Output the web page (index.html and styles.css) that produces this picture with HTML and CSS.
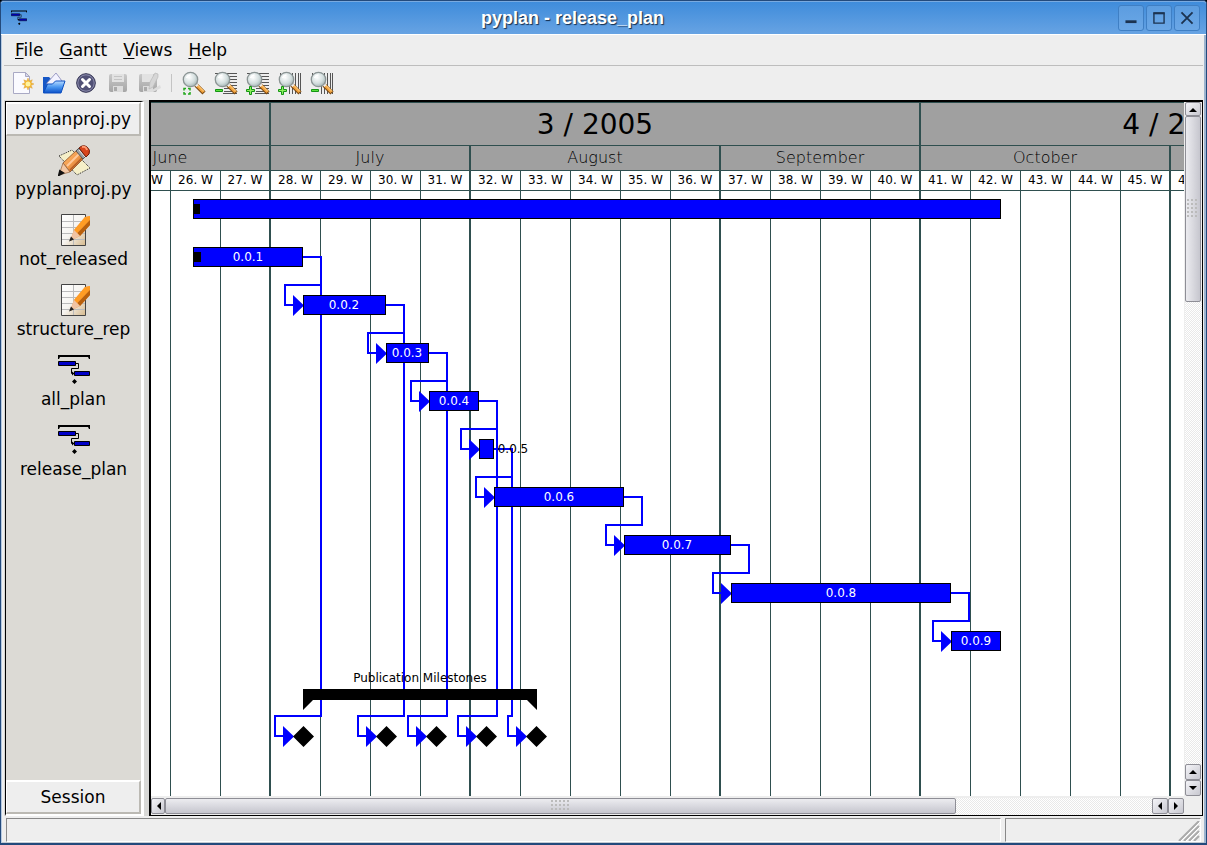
FILE: index.html
```
<!DOCTYPE html>
<html lang="en">
<head>
<meta charset="utf-8">
<title>pyplan - release_plan</title>
<link rel="stylesheet" href="styles.css">
</head>
<body>
<svg class="defs" aria-hidden="true">
  <defs>
    <linearGradient id="wood" x1="0" y1="0" x2="1" y2="1"><stop offset="0" stop-color="#ffc27a"/><stop offset=".5" stop-color="#f29a4a"/><stop offset="1" stop-color="#a8571c"/></linearGradient>
    <radialGradient id="glass" cx=".4" cy=".35" r=".7"><stop offset="0" stop-color="#fff"/><stop offset=".6" stop-color="#d3dede"/><stop offset="1" stop-color="#9fb0b0"/></radialGradient>
    <linearGradient id="sheet" x1="0" y1="0" x2="1" y2="1"><stop offset="0" stop-color="#fff"/><stop offset=".5" stop-color="#f6f4f0"/><stop offset="1" stop-color="#d6b98c"/></linearGradient>
    <linearGradient id="folder" x1="0" y1="0" x2="0" y2="1"><stop offset="0" stop-color="#b9dcff"/><stop offset=".5" stop-color="#4a97f0"/><stop offset="1" stop-color="#0b50c8"/></linearGradient>
    <linearGradient id="disk" x1="0" y1="0" x2="0" y2="1"><stop offset="0" stop-color="#c9c9c9"/><stop offset="1" stop-color="#a6a6a6"/></linearGradient>
    <symbol id="lens" viewBox="0 0 24 24">
      <path d="M14 14l8 8" stroke="#7c4a12" stroke-width="4.500"/>
      <path d="M15 14.500l6.500 6.500" stroke="#f2a23c" stroke-width="3"/>
      <path d="M15.500 14l6.500 6.500" stroke="#ffd58c" stroke-width="1"/>
      <path d="M13.500 13l2 2" stroke="#eee" stroke-width="3"/>
      <circle cx="8.500" cy="8.500" r="7.200" fill="url(#glass)" stroke="#8b9494" stroke-width="1.300"/>
      <path d="M4.500 7a5 5 0 0 1 4-3" fill="none" stroke="#fff" stroke-width="1.500"/>
    </symbol>
    <symbol id="rows" viewBox="0 0 24 24"><path d="M1 2.500h22M3 5.500h20M3 8.500h20M10 11.500h13M10 14.500h13M10 17.500h13M10 20.500h13M9 22.500h14" stroke="#555" stroke-width="1"/></symbol>
    <symbol id="cols" viewBox="0 0 24 24"><path d="M2.500 2v10M5.500 2v10M8.500 2v10M11.500 2v21M14.500 2v21M17.500 2v21M20.500 2v21M22.500 2v21" stroke="#555" stroke-width="1"/></symbol>
    <symbol id="plus" viewBox="0 0 24 24"><path d="M3.500 15.500h2v3h3v2h-3v3h-2v-3h-3v-2h3z" fill="#8cf05c" stroke="#149414"/></symbol>
    <symbol id="minus" viewBox="0 0 24 24"><path d="M1.500 18.500h7v2h-7z" fill="#5ae03c" stroke="#149414"/></symbol>
    <symbol id="report" viewBox="0 0 32 32">
      <path d="M3.500 .5h24v31h-24z" fill="url(#sheet)" stroke="#444"/>
      <path d="M4 7.500h23M4 13.500h23M4 19.500h23M4 25.500h23M15.500 1v30" stroke="#bbb" stroke-width="1"/>
      <path d="M12 27l4-11L27 3l5-1v9L22 22z" fill="url(#wood)"/>
      <path d="M16 16L27 3l5-1v4L19 19z" fill="#ff9c24"/>
      <path d="M22 22l10-11V6L19.500 19z" fill="#b8600c"/>
      <path d="M16 16l6 6-10 5z" fill="#f0c3a3"/>
      <path d="M11 27.500l2-5 3 3z" fill="#222"/>
    </symbol>
    <symbol id="plan" viewBox="0 0 32 32">
      <path d="M0 1h32v4h-1l-1-2H2L1 5H0z" fill="#000"/>
      <path d="M.5 7.500h17v4h-17zM16.500 17.500h15v4h-15z" fill="#0000c8" stroke="#000"/>
      <path d="M18 9.500h2.500v5h-7v5h3" fill="none" stroke="#000"/>
      <path d="M14 17.500l2.500 2-2.500 2zM16.500 25l2.500 2.500-2.500 2.500-2.500-2.500z" fill="#000"/>
    </symbol>
  </defs>
</svg>
<div class="window">
  <header class="titlebar">
    <svg class="app-icon" viewBox="0 0 32 32"><use href="#plan"/></svg>
    <h1 class="title">pyplan - release_plan</h1>
    <div class="window-buttons">
      <button class="window-button" aria-label="Minimize"><svg viewBox="0 0 26 26"><path d="M7 17h12" stroke-width="3"/></svg></button>
      <button class="window-button" aria-label="Maximize"><svg viewBox="0 0 26 26"><path d="M7.500 7.500h11v11h-11z" stroke-width="1.500"/><path d="M7 8h12" stroke-width="2"/></svg></button>
      <button class="window-button" aria-label="Close"><svg viewBox="0 0 26 26"><path d="M7 7l12 12M19 7L7 19" stroke-width="2"/></svg></button>
    </div>
  </header>
  <nav class="menubar">
    <button class="menu"><u>F</u>ile</button>
    <button class="menu"><u>G</u>antt</button>
    <button class="menu"><u>V</u>iews</button>
    <button class="menu"><u>H</u>elp</button>
  </nav>
  <div class="toolbar">
    <button class="tool" aria-label="New"><svg viewBox="0 0 24 24">
      <path d="M3.500 1.500h12l4 4v17h-16z" fill="#fafaff" stroke="#a9a9c4"/><path d="M15.500 1.500v4h4z" fill="#d8d8ec" stroke="#a9a9c4"/>
      <path d="M18 7l1.300 3 3-1.200-1.200 3 3 1.200-3 1.300 1.200 3-3-1.300-1.300 3-1.200-3-3 1.300 1.200-3-3-1.300 3-1.200-1.200-3 3 1.200z" fill="#f4b62c" stroke="#dca54a" stroke-width=".5"/><circle cx="18" cy="13" r="2.500" fill="#fff3a0"/></svg></button>
    <button class="tool" aria-label="Open"><svg viewBox="0 0 24 24">
      <path d="M1 22V6h6l2 2h10v14z" fill="#1657c6"/><path d="M5 12l9-10 6 8v7H6z" fill="#f3f3ff" stroke="#9c9cc4"/>
      <path d="M1.500 22l4-9h5l3-3h9.500l-4 12z" fill="url(#folder)" stroke="#0c4fc0"/></svg></button>
    <button class="tool" aria-label="Close plan"><svg viewBox="0 0 24 24">
      <circle cx="12" cy="12" r="9.300" fill="#515176" stroke="#2e2e4e" stroke-width="1"/><circle cx="12" cy="12" r="8.200" fill="none" stroke="#8d8dae"/>
      <path d="M8.500 8.500l7 7M15.500 8.500l-7 7" stroke="#fff" stroke-width="3" stroke-linecap="round"/></svg></button>
    <button class="tool" aria-label="Save"><svg viewBox="0 0 24 24">
      <rect x="3" y="3" width="18" height="18" rx="2" fill="url(#disk)"/><path d="M6 3h12v8H6z" fill="#e2e2e2"/><path d="M8 5.500h8M8 8.500h8" stroke="#c4c4c4"/><path d="M7 15h10v6H7z" fill="#ddd"/><path d="M8 16h3v4H8z" fill="#aaa"/></svg></button>
    <button class="tool" aria-label="Save as"><svg viewBox="0 0 24 24">
      <rect x="1" y="3" width="18" height="18" rx="2" fill="url(#disk)"/><path d="M4 3h11v8H4z" fill="#e2e2e2"/><path d="M5 15h10v6H5z" fill="#ddd"/><path d="M6 16h3v4H6z" fill="#aaa"/>
      <path d="M11 18l1-7 5-9 3 1v3l-5 10z" fill="#d6d6d6" stroke="#b9b9b9" stroke-width=".7"/><path d="M14 19l8-5 1 3-8 4z" fill="#ddd"/></svg></button>
    <span class="tool-separator"></span>
    <button class="tool" aria-label="Zoom to fit"><svg viewBox="0 0 24 24"><use href="#lens"/><path d="M2 19.500V17.500H4M6 17.500h2V19.500M2 21v2H4M6 23h2V21" fill="none" stroke="#22a81c" stroke-width="1.500"/></svg></button>
    <button class="tool" aria-label="Shrink rows"><svg viewBox="0 0 24 24"><use href="#rows"/><use href="#lens"/><use href="#minus"/></svg></button>
    <button class="tool" aria-label="Grow rows"><svg viewBox="0 0 24 24"><use href="#rows"/><use href="#lens"/><use href="#plus"/></svg></button>
    <button class="tool" aria-label="Grow columns"><svg viewBox="0 0 24 24"><use href="#cols"/><use href="#lens"/><use href="#plus"/></svg></button>
    <button class="tool" aria-label="Shrink columns"><svg viewBox="0 0 24 24"><use href="#cols"/><use href="#lens"/><use href="#minus"/></svg></button>
  </div>
  <main class="workspace">
    <aside class="sidebar">
      <button class="section-button">pyplanproj.py</button>
      <div class="views">
        <button class="view"><svg viewBox="0 0 32 32">
          <path d="M1 12l13-6 18 18-13 7z" fill="#f5efc8" stroke="#222" stroke-dasharray="1 1"/>
          <path d="M5 19L20 5l7 8-15 15z" fill="url(#wood)" stroke="#7c3c14" stroke-width=".7"/>
          <path d="M9 22L23 8" stroke="#ffc99a" stroke-width="2"/><path d="M12 26L26 12" stroke="#b35a20" stroke-width="1.500"/>
          <path d="M18 7l3-3 7 8-3 3z" fill="#9aa0a4" stroke="#555"/><path d="M21 6l6 7" stroke="#e8e8e8"/>
          <path d="M21 4q4-4 8-1t2 7l-3 3z" fill="#d8451c" stroke="#701c08"/><path d="M24 3q4-1 5 3" fill="none" stroke="#ff9b72" stroke-width="2"/>
          <path d="M5 19l7 9-11 3z" fill="#f2c7a5" stroke="#92633e" stroke-width=".7"/><path d="M2 27l3 2-4 2z" fill="#111" stroke="#111" stroke-width="2"/></svg>pyplanproj.py</button>
        <button class="view"><svg viewBox="0 0 32 32"><use href="#report"/></svg>not_released</button>
        <button class="view"><svg viewBox="0 0 32 32"><use href="#report"/></svg>structure_rep</button>
        <button class="view"><svg viewBox="0 0 32 32"><use href="#plan"/></svg>all_plan</button>
        <button class="view"><svg viewBox="0 0 32 32"><use href="#plan"/></svg>release_plan</button>
      </div>
      <button class="section-button">Session</button>
    </aside>
    <section class="gantt">
      <div class="canvas">
        <div class="scale quarters">
          <div class="cell w4 strong"></div><div class="cell w13 strong">3 / 2005</div><div class="cell last">4 / 2005</div>
        </div>
        <div class="scale months">
          <div class="cell w4 strong">June</div><div class="cell w4 strong">July</div><div class="cell w5 strong">August</div><div class="cell w4 strong">September</div><div class="cell w5 strong">October</div><div class="cell w4"></div>
        </div>
        <div class="scale weeks">
          <div class="cell"></div><div class="cell">25. W</div><div class="cell">26. W</div><div class="cell strong">27. W</div>
          <div class="cell">28. W</div><div class="cell">29. W</div><div class="cell">30. W</div><div class="cell strong">31. W</div>
          <div class="cell">32. W</div><div class="cell">33. W</div><div class="cell">34. W</div><div class="cell">35. W</div><div class="cell strong">36. W</div>
          <div class="cell">37. W</div><div class="cell">38. W</div><div class="cell">39. W</div><div class="cell strong">40. W</div>
          <div class="cell">41. W</div><div class="cell">42. W</div><div class="cell">43. W</div><div class="cell">44. W</div><div class="cell strong">45. W</div><div class="cell">46. W</div>
        </div>
        <div class="chart">
          <svg class="plot" width="1400" height="1200" viewBox="151 191 1400 1200">
            <path class="week-lines" d="M170.500 191v1200M220.500 191v1200M320.500 191v1200M370.500 191v1200M420.500 191v1200M520.500 191v1200M570.500 191v1200M620.500 191v1200M670.500 191v1200M770.500 191v1200M820.500 191v1200M870.500 191v1200M970.500 191v1200M1020.500 191v1200M1070.500 191v1200M1120.500 191v1200"/>
            <path class="month-lines" d="M270 191v1200M470 191v1200M720 191v1200M920 191v1200M1170 191v1200"/>
            <g class="links">
              <path d="M303 257H321V285H285V305H294"/>
              <path d="M386 305H404V333H368V353H377"/>
              <path d="M429 353H447V381H411V401H420"/>
              <path d="M479 401H497V429H461V449H470"/>
              <path d="M494 449H512V477H476V497H485"/>
              <path d="M624 497H642V525H606V545H615"/>
              <path d="M731 545H749V573H713V593H722"/>
              <path d="M951 593H969V621H933V641H942"/>
              <path d="M321 257V716H275V736H284"/>
              <path d="M404 305V716H358V736H367"/>
              <path d="M447 353V716H408V736H417"/>
              <path d="M497 401V716H458V736H467"/>
              <path d="M512 449V716H508V736H517"/>
            </g>
            <path class="arrows" d="M293 295v21l11-10.500zM376 343v21l11-10.500zM419 391v21l11-10.500zM469 439v21l11-10.500zM484 487v21l11-10.500zM614 535v21l11-10.500zM721 583v21l11-10.500zM941 631v21l11-10.500zM283 726v21l11-10.500zM366 726v21l11-10.500zM416 726v21l11-10.500zM466 726v21l11-10.500zM516 726v21l11-10.500z"/>
            <g class="bars">
              <rect x="193.500" y="199.500" width="807" height="19"/>
              <rect x="193.500" y="247.500" width="109" height="19"/>
              <rect x="303.500" y="295.500" width="82" height="19"/>
              <rect x="386.500" y="343.500" width="42" height="19"/>
              <rect x="429.500" y="391.500" width="49" height="19"/>
              <rect x="479.500" y="439.500" width="14" height="19"/>
              <rect x="494.500" y="487.500" width="129" height="19"/>
              <rect x="624.500" y="535.500" width="106" height="19"/>
              <rect x="731.500" y="583.500" width="219" height="19"/>
              <rect x="951.500" y="631.500" width="49" height="19"/>
            </g>
            <path class="solid" d="M194 204h6v10h-6zM194 252h7v10h-7zM303 689H537V710L527 700H313L303 710z"/>
            <path class="solid" d="M303.500 726l10.500 10.500-10.500 10.500-10.500-10.500zM386.500 726l10.500 10.500-10.500 10.500-10.500-10.500zM436.500 726l10.500 10.500-10.500 10.500-10.500-10.500zM486.500 726l10.500 10.500-10.500 10.500-10.500-10.500zM536.500 726l10.500 10.500-10.500 10.500-10.500-10.500z"/>
            <g class="bar-labels">
              <text x="248" y="261">0.0.1</text><text x="344" y="309">0.0.2</text><text x="407" y="357">0.0.3</text><text x="454" y="405">0.0.4</text>
              <text x="559" y="501">0.0.6</text><text x="677" y="549">0.0.7</text><text x="841" y="597">0.0.8</text><text x="976" y="645">0.0.9</text>
            </g>
            <g class="outer-labels"><text x="513" y="453">0.0.5</text><text x="420" y="682">Publication Milestones</text></g>
          </svg>
        </div>
      </div>
      <div class="scroll vertical">
        <button class="scroll-arrow" aria-label="Up"><svg viewBox="0 0 14 14"><path d="M3 9l4-4 4 4z"/></svg></button>
        <div class="thumb"><span class="grip"></span></div>
        <div class="track"></div>
        <button class="scroll-arrow" aria-label="Page up"><svg viewBox="0 0 14 14"><path d="M3 9l4-4 4 4z"/></svg></button>
        <button class="scroll-arrow" aria-label="Down"><svg viewBox="0 0 14 14"><path d="M3 5l4 4 4-4z"/></svg></button>
      </div>
      <div class="scroll horizontal">
        <button class="scroll-arrow" aria-label="Left"><svg viewBox="0 0 14 14"><path d="M9 3L5 7l4 4z"/></svg></button>
        <div class="thumb"><span class="grip"></span></div>
        <div class="track"></div>
        <button class="scroll-arrow" aria-label="Page left"><svg viewBox="0 0 14 14"><path d="M9 3L5 7l4 4z"/></svg></button>
        <button class="scroll-arrow" aria-label="Right"><svg viewBox="0 0 14 14"><path d="M5 3l4 4-4 4z"/></svg></button>
      </div>
    </section>
  </main>
  <footer class="statusbar">
    <div class="status-message"></div>
    <div class="status-extra"><svg class="resize-grip" viewBox="0 0 22 20"><path d="M1 20L21 0M6 20L21 5M11 20L21 10M16 20L21 15" stroke="#aaa" stroke-width="2"/><path d="M3 20L22 1M8 20L22 6M13 20L22 11" stroke="#fff"/></svg></div>
  </footer>
</div>
</body>
</html>
```
FILE: styles.css
```
* { box-sizing: border-box; }
html, body { height: 100%; margin: 0; }
body { background: #000; font: 17px/20px "DejaVu Sans", sans-serif; color: #000; overflow: hidden; }
button { margin: 0; padding: 0; border: 0; background: none; font: inherit; color: inherit; }
svg { display: block; }
.defs { position: absolute; width: 0; height: 0; }

.window {
  display: flex; flex-direction: column; height: 100vh;
  background: #eee; border: 1px solid #234a7c; border-bottom-width: 2px; border-radius: 4px 4px 0 0;
  box-shadow: inset 1px 0 #b8cbe2, inset -2px 0 #9db4cf, inset 0 -1px #c3cad2;
}

.titlebar {
  display: grid; grid-template-columns: auto 1fr auto; align-items: center; flex: none; height: 34px;
  padding: 0 6px 0 10px;
  background: linear-gradient(#3f8cdb, #67a3e3);
  border-top: 1px solid #79aae0; border-bottom: 1px solid #fff; border-radius: 3px 3px 0 0;
}
.app-icon { width: 16px; height: 16px; }
.title { margin: 0; text-align: center; font: bold 18px/24px "Liberation Sans", Arial, sans-serif; color: #fff; text-shadow: 1px 1px 1px #152c4a; }
.window-buttons { display: flex; justify-content: flex-end; gap: 2px; }
.window-button { width: 26px; height: 26px; border: 1px solid #3f7fc4; border-radius: 3px; background: linear-gradient(#5c9de0, #6ba7e6); }
.window-button svg { width: 24px; height: 24px; fill: none; stroke: #1c3350; }

.menubar { display: flex; align-items: center; flex: none; height: 31px; margin: 0 3px; padding: 0 3px; border-bottom: 1px solid #bdbdbd; }
.menu { padding: 0 8px; }
.menu u { text-decoration-thickness: 1px; text-underline-offset: 2px; }

.toolbar { display: flex; align-items: center; flex: none; height: 34px; padding-left: 5px; }
.tool { display: grid; place-items: center; width: 32px; height: 32px; }
.tool svg { width: 24px; height: 24px; }
.tool-separator { width: 12px; height: 18px; background: linear-gradient(#c4c4c4, #c4c4c4) 5px 0 / 1px 100% no-repeat; }

.workspace { display: flex; gap: 5px; flex: 1; min-height: 0; margin: 0 3px; background: #d8d8d6; }
.sidebar {
  display: flex; flex-direction: column; flex: none; width: 139px;
  margin: 1px 0 0 1px;
  background: #dcdad5; border: solid; border-width: 1px 3px 2px 1px; border-color: #000 #fff #fff #000;
}
.section-button { height: 34px; background: #eee; border: 2px solid; border-color: #fff #bbb9b3 #bbb9b3 #fff; border-left-width: 1px; }
.views { display: flex; flex-direction: column; flex: 1; padding-top: 8px; }
.view { display: flex; flex-direction: column; align-items: center; gap: 3px; height: 70px; }
.view svg { width: 32px; height: 32px; }

.gantt {
  display: grid; grid-template: minmax(0, 1fr) 17px / minmax(0, 1fr) 17px; gap: 2px 1px;
  flex: 1; min-width: 0; background: #eee;
  border: solid #000; border-width: 2px 1px 1px 2px;
}
.canvas { display: flex; flex-direction: column; min-width: 0; min-height: 0; overflow: hidden; background: #fff; border-top: 1px solid #2f4f4f; }
.scale { display: flex; flex: none; margin-left: -80px; border-bottom: 1px solid #2f4f4f; }
.cell { flex: none; width: 50px; text-align: center; border-right: 1px solid #2f4f4f; white-space: nowrap; }
.cell.strong { border-right-width: 2px; }
.w4 { width: 200px; }
.w5 { width: 250px; }
.w13 { width: 650px; }
.last { width: 520px; }
.quarters { height: 43px; background: #a0a0a0; font-size: 28px; line-height: 44px; }
.months { height: 25px; background: #a0a0a0; font-size: 16px; font-weight: 200; line-height: 24px; }
.weeks { height: 20px; background: #fff; font-size: 12px; line-height: 19px; }

.chart { flex: 1; min-height: 0; overflow: hidden; }
.plot { font-size: 12px; }
.week-lines { fill: none; stroke: #2f4f4f; stroke-width: 1; }
.month-lines { fill: none; stroke: #2f4f4f; stroke-width: 2; }
.links { fill: none; stroke: #00f; stroke-width: 2; }
.arrows { fill: #00f; }
.bars { fill: #00f; stroke: #000; }
.solid { fill: #000; }
.bar-labels { fill: #fff; text-anchor: middle; }
.outer-labels { fill: #000; text-anchor: middle; }

.scroll { display: flex; min-width: 0; min-height: 0; }
.vertical { flex-direction: column; }
.scroll-arrow { display: grid; place-items: center; flex: none; width: 16px; height: 16px; border: 1px solid #8e8e96; border-radius: 2px; background: linear-gradient(135deg, #f4f4f8, #c8c8d0); }
.horizontal .scroll-arrow:first-child { width: 14px; }
.vertical .scroll-arrow:first-child { height: 14px; }
.scroll-arrow svg { width: 14px; height: 14px; fill: #000; }
.scroll-arrow:first-child { place-items: center; overflow: hidden; }
.thumb { display: grid; place-items: center; border: 1px solid #8e8e96; border-radius: 2px; }
.vertical .thumb { flex: 0 0 calc(27% - 1px); width: 16px; background: linear-gradient(90deg, #ececf0, #c6c6ce); }
.horizontal .thumb { flex: 0 0 calc(77% - 4px); height: 16px; background: linear-gradient(#ececf0, #c6c6ce); }
.track { flex: 1; background: repeating-conic-gradient(#fff 0 25%, #e9e9e9 0 50%) 0 0 / 2px 2px; }
.grip { width: 12px; height: 20px; background: radial-gradient(circle at 1px 1px, #bbb 1px, transparent 1px) 0 0 / 4px 4px; }
.horizontal .grip { width: 20px; height: 12px; }

.statusbar { display: flex; gap: 4px; flex: none; height: 26px; margin: 0 5px 1px; padding-top: 2px; }
.status-message, .status-extra { border: 1px solid; border-color: #888 #fff #fff #888; }
.status-message { flex: 1; }
.status-extra { display: flex; justify-content: flex-end; align-items: flex-end; flex: 0 0 196px; }
.resize-grip { width: 22px; height: 20px; }
```
